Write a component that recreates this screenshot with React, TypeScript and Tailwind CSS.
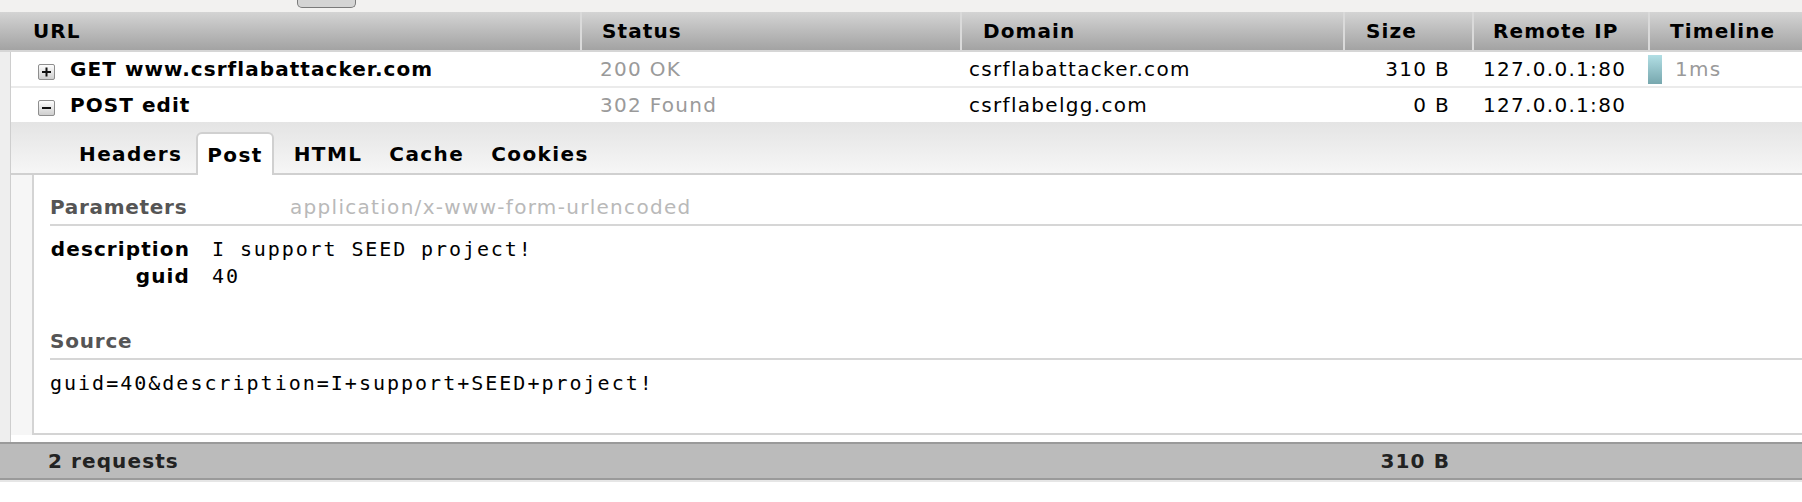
import React from 'react';

const ToggleBox = ({ open }: { open: boolean }) => (
  <svg width="17" height="16" viewBox="0 0 17 16" className="mt-[6px] shrink-0">
    <defs>
      <linearGradient id={open ? 'tb-open' : 'tb-closed'} x1="0" y1="0" x2="0" y2="1">
        <stop offset="0" stopColor="#ffffff" />
        <stop offset="1" stopColor="#cdcdcd" />
      </linearGradient>
    </defs>
    <rect x="0.5" y="0.5" width="16" height="15" rx="1.5" fill={open ? 'url(#tb-open)' : 'url(#tb-closed)'} stroke="#8e8e8e" />
    <rect x="4" y="7" width="9" height="2" fill="#111" />
    {!open && <rect x="7.5" y="3.5" width="2" height="9" fill="#111" />}
  </svg>
);

const tabs = ['Headers', 'Post', 'HTML', 'Cache', 'Cookies'];

export default function App() {
  return (
    <div className="min-h-[502px] w-[1802px] bg-white font-['DejaVu_Sans',sans-serif] text-[20px] tracking-[1.1px] text-black">
      {/* top strip with drag handle */}
      <div className="h-[12px] bg-[#f2f1f0] pl-[297px]">
        <div className="h-[8px] w-[59px] rounded-b-[5px] border-x border-b border-[#7a7a7a] bg-[#d4d4d4]" />
      </div>

      {/* column headers */}
      <div className="flex h-[40px] border-b-2 border-[#d6d6d6] bg-linear-to-b from-[#d4d4d4] to-[#a3a3a3] font-bold">
        <div className="flex w-[580px] items-center pl-[33px]">URL</div>
        <div className="flex w-[380px] items-center border-l-2 border-[#dadada] pl-[20px]">Status</div>
        <div className="flex w-[383px] items-center border-l-2 border-[#dadada] pl-[21px]">Domain</div>
        <div className="flex w-[129px] items-center border-l-2 border-[#dadada] pl-[21px]">Size</div>
        <div className="flex w-[176px] items-center border-l-2 border-[#dadada] pl-[19px]">Remote IP</div>
        <div className="flex w-[154px] items-center border-l-2 border-[#dadada] pl-[20px]">Timeline</div>
      </div>

      <div className="flex">
        <div className="w-[11px] border-r border-[#cecece] bg-[#eeeeee]" />
        <div className="flex-1">
          {/* request rows */}
          <div className="flex h-[36px] items-center border-b-2 border-[#ebebeb]">
            <div className="flex w-[569px] items-center gap-[15px] pl-[27px] font-bold tracking-[1.05px]">
              <ToggleBox open={false} />
              <span>GET www.csrflabattacker.com</span>
            </div>
            <div className="w-[380px] pl-[20px] tracking-[1.3px] text-[#9a9a9a]">200 OK</div>
            <div className="w-[383px] pl-[9px] tracking-[1.3px]">csrflabattacker.com</div>
            <div className="w-[129px] pr-[22px] text-right tracking-[1.3px]">310 B</div>
            <div className="w-[176px] pl-[11px] tracking-[1.3px]">127.0.0.1:80</div>
            <div className="flex h-full w-[154px] items-center gap-[13px]">
              <div className="h-[29px] w-[14px] bg-linear-to-b from-[#b2dfe5] to-[#77a7ae]" />
              <span className="tracking-[1.3px] text-[#9a9a9a]">1ms</span>
            </div>
          </div>
          <div className="flex h-[34px] items-center">
            <div className="flex w-[569px] items-center gap-[15px] pl-[27px] font-bold tracking-[1.05px]">
              <ToggleBox open={true} />
              <span>POST edit</span>
            </div>
            <div className="w-[380px] pl-[20px] tracking-[1.3px] text-[#9a9a9a]">302 Found</div>
            <div className="w-[383px] pl-[9px] tracking-[1.3px]">csrflabelgg.com</div>
            <div className="w-[129px] pr-[22px] text-right tracking-[1.3px]">0 B</div>
            <div className="w-[176px] pl-[11px] tracking-[1.3px]">127.0.0.1:80</div>
            <div className="w-[154px]" />
          </div>

          {/* tab bar */}
          <div className="flex h-[53px] items-end gap-[1px] border-b-2 border-[#d0d0d0] bg-linear-to-b from-[#e4e4e4] to-[#f6f6f6] pl-[55px] font-bold tracking-[1.4px]">
            {tabs.map((t) => (
              <div
                key={t}
                className={
                  t === 'Post'
                    ? '-mb-[2px] mr-[6px] flex h-[43px] items-center rounded-t-[6px] border-x-2 border-t-2 border-[#d0d0d0] bg-white px-[9px]'
                    : '-mb-[2px] flex h-[43px] items-center px-[13px]'
                }
              >
                {t}
              </div>
            ))}
          </div>

          {/* post panel */}
          <div className="flex bg-[#f6f6f6] pl-[21px]">
            <div className="h-[260px] flex-1 border-b-2 border-l-2 border-[#d4d4d4] bg-white pl-[16px] pt-[15px]">
              <div className="flex h-[36px] items-center border-b-2 border-[#d6d6d6]">
                <span className="w-[240px] font-bold tracking-[0.7px] text-[#555555]">Parameters</span>
                <span className="tracking-[1.3px] text-[#b9b9b9]">application/x-www-form-urlencoded</span>
              </div>
              <div className="pt-[9px]">
                <div className="flex h-[27px] items-center">
                  <span className="w-[140px] text-right font-bold">description</span>
                  <span className="pl-[22px] font-['DejaVu_Sans_Mono',monospace] tracking-[1.9px]">I support SEED project!</span>
                </div>
                <div className="flex h-[27px] items-center">
                  <span className="w-[140px] text-right font-bold">guid</span>
                  <span className="pl-[22px] font-['DejaVu_Sans_Mono',monospace] tracking-[1.9px]">40</span>
                </div>
              </div>
              <div className="mt-[34px] flex h-[37px] items-center border-b-2 border-[#d6d6d6]">
                <span className="font-bold tracking-[0.8px] text-[#555555]">Source</span>
              </div>
              <div className="mt-[10px] flex h-[26px] items-center font-['DejaVu_Sans_Mono',monospace] tracking-[2px]">
                guid=40&amp;description=I+support+SEED+project!
              </div>
            </div>
          </div>
          <div className="h-[7px] bg-white" />
        </div>
      </div>

      {/* status bar */}
      <div className="flex h-[38px] items-center border-y-2 border-[#9a9a9a] bg-[#bbbbbb] font-bold text-[#222222]">
        <div className="w-[1343px] pl-[48px]">2 requests</div>
        <div className="w-[129px] pr-[22px] text-right">310 B</div>
      </div>
      <div className="h-[2px] bg-[#e6e6e6]" />
    </div>
  );
}
